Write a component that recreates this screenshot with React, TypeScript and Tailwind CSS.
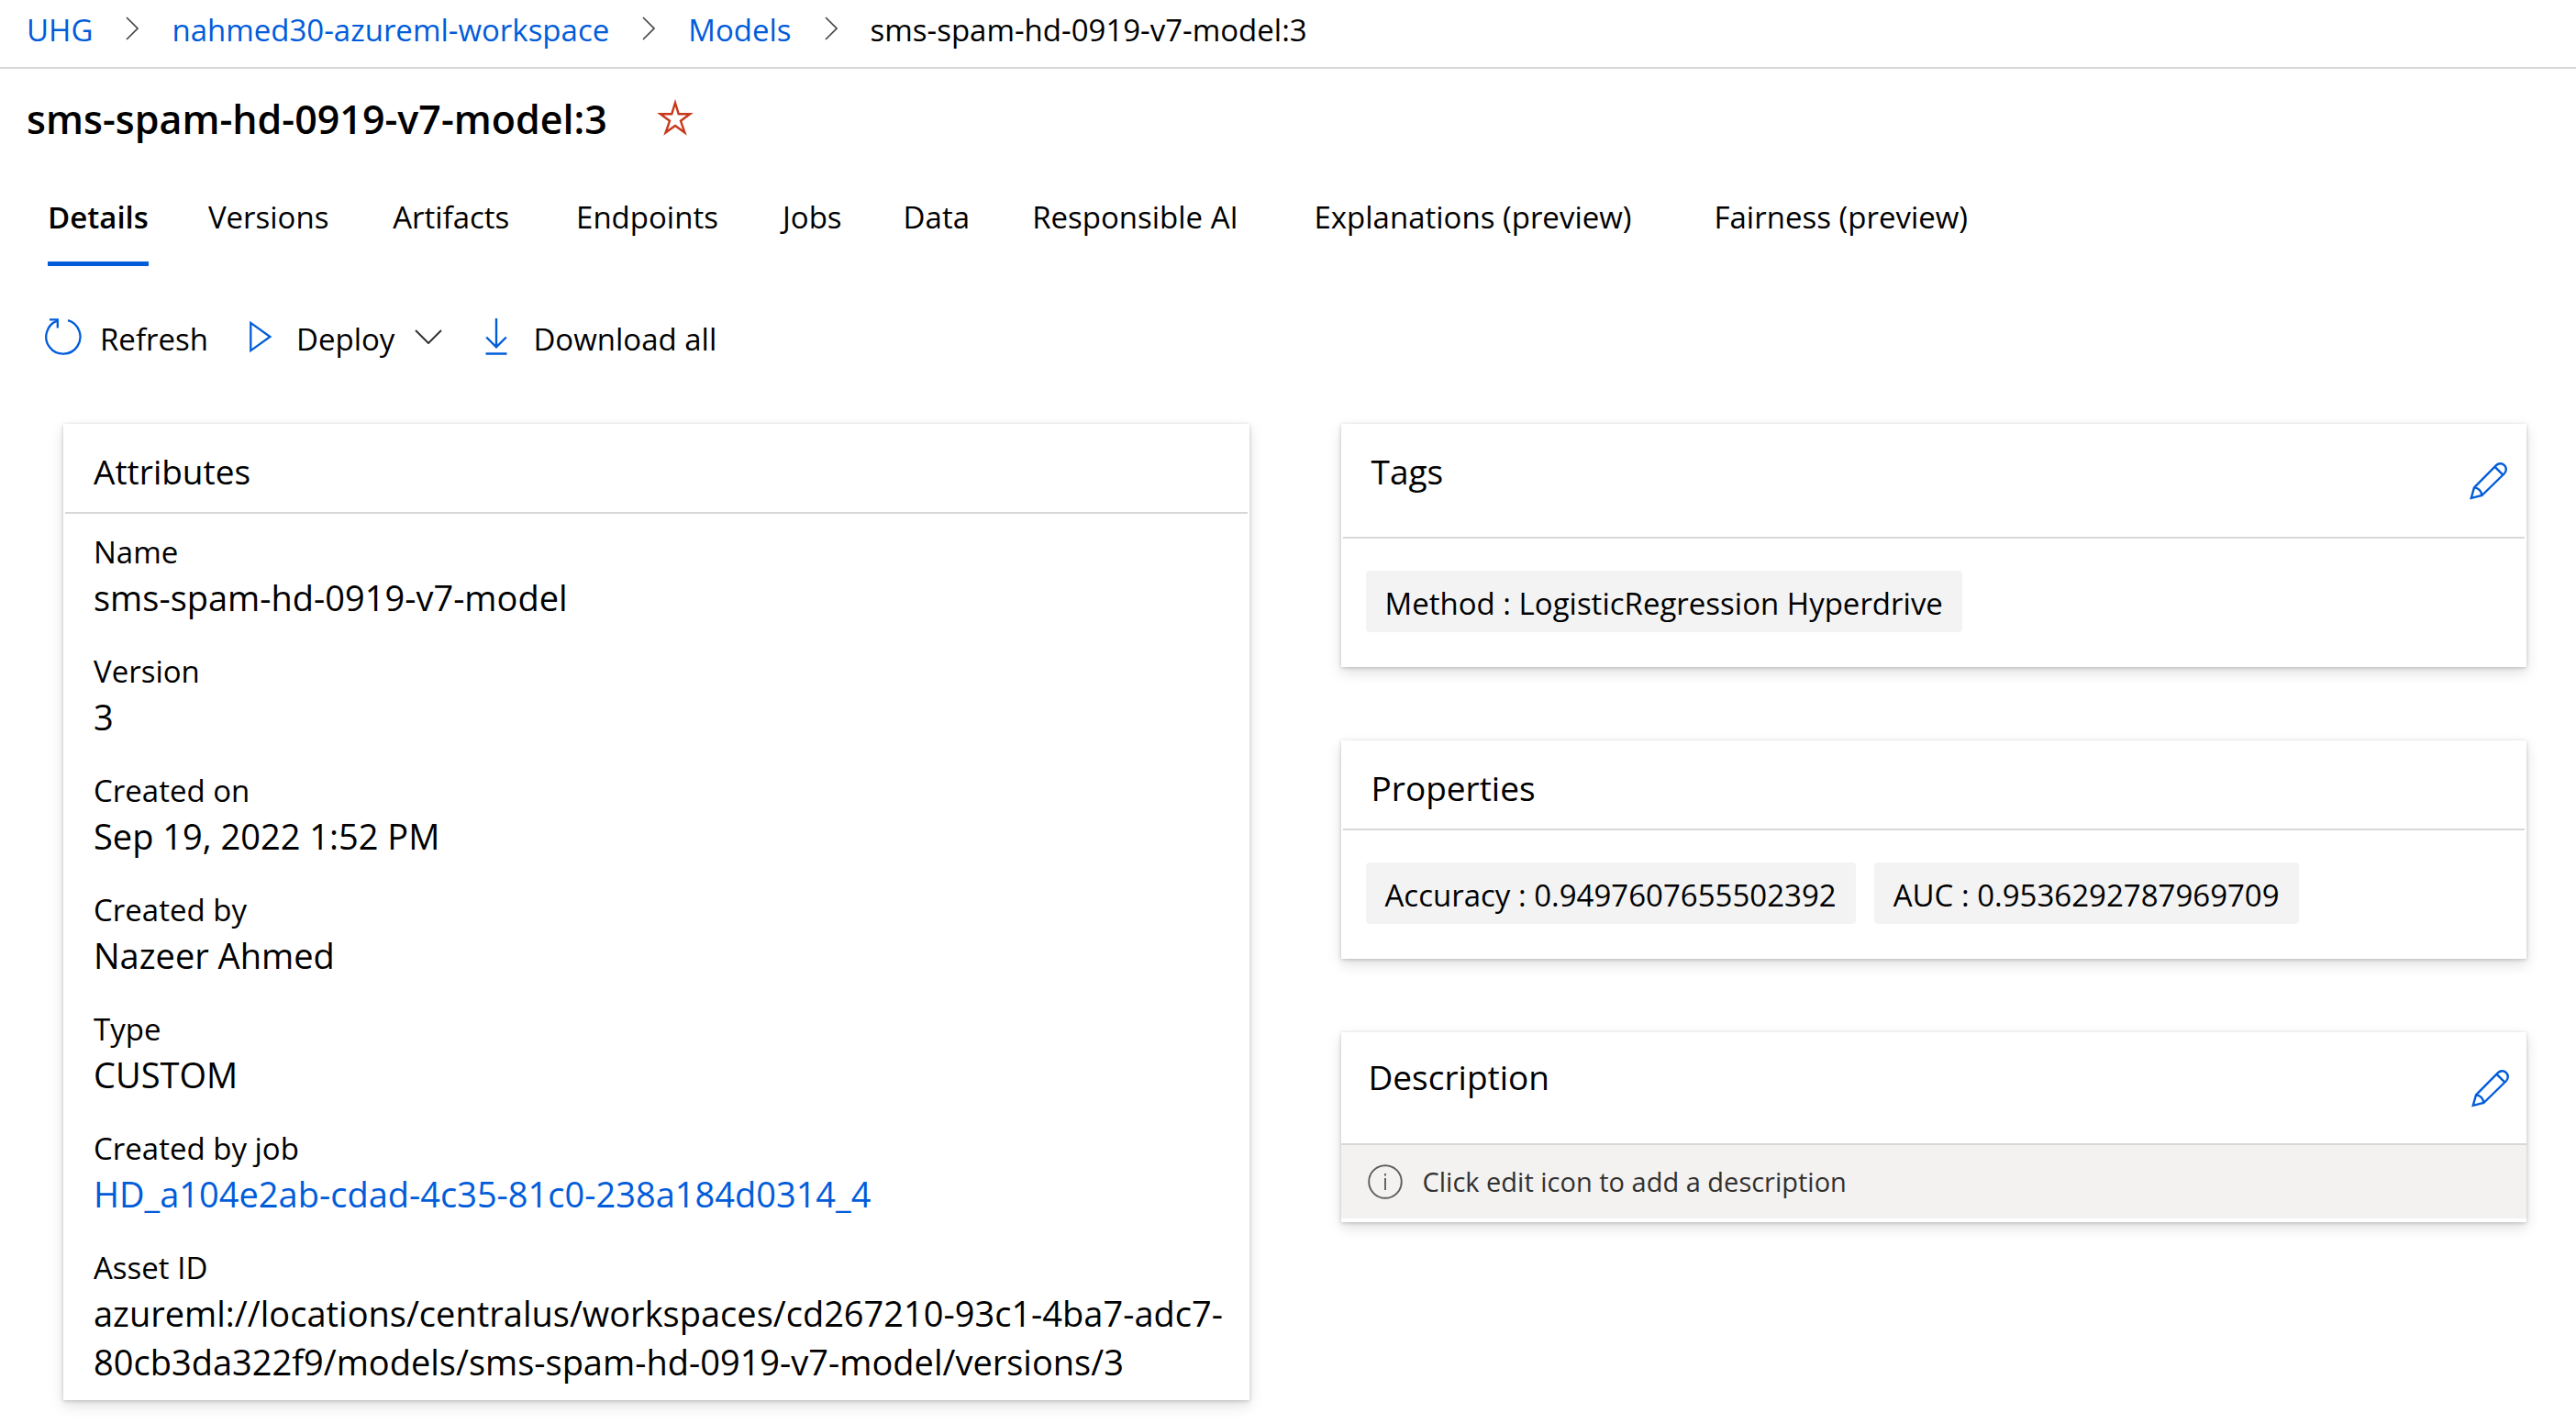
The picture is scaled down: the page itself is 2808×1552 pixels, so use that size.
import type { ReactNode } from "react";

const CRUMBS = ["UHG", "nahmed30-azureml-workspace", "Models"];

const TABS: { label: string; preview?: boolean }[] = [
  { label: "Details" },
  { label: "Versions" },
  { label: "Artifacts" },
  { label: "Endpoints" },
  { label: "Jobs" },
  { label: "Data" },
  { label: "Responsible AI" },
  { label: "Explanations (preview)", preview: true },
  { label: "Fairness (preview)", preview: true },
];

const ATTRIBUTES: { label: string; value: string; link?: boolean }[] = [
  { label: "Name", value: "sms-spam-hd-0919-v7-model" },
  { label: "Version", value: "3" },
  { label: "Created on", value: "Sep 19, 2022 1:52 PM" },
  { label: "Created by", value: "Nazeer Ahmed" },
  { label: "Type", value: "CUSTOM" },
  { label: "Created by job", value: "HD_a104e2ab-cdad-4c35-81c0-238a184d0314_4", link: true },
  {
    label: "Asset ID",
    value:
      "azureml://locations/centralus/workspaces/cd267210-93c1-4ba7-adc7-80cb3da322f9/models/sms-spam-hd-0919-v7-model/versions/3",
  },
];

function ChevronRight() {
  return (
    <svg width="14" height="26" viewBox="0 0 14 26" fill="none" stroke="#444" strokeWidth="1.6" aria-hidden="true">
      <path d="M1 1l12 12L1 25" />
    </svg>
  );
}

function ChevronDown() {
  return (
    <svg width="30" height="16" viewBox="0 0 30 16" fill="none" stroke="#333" strokeWidth="2" aria-hidden="true">
      <path d="M1 1l14 14L29 1" />
    </svg>
  );
}

function StarIcon() {
  return (
    <svg width="40" height="40" viewBox="0 0 40 40" fill="none" stroke="#c8381a" strokeWidth="2.4" aria-hidden="true">
      <path d="M20 4l3.7 12.2H36.2L26 23.8l4.4 12.7L20 29 9.6 36.5 14 23.8 3.8 16.2h12.5z" />
    </svg>
  );
}

function RefreshIcon() {
  return (
    <svg width="40" height="42" viewBox="0 0 40 42" fill="none" stroke="#015cda" strokeWidth="2.3" aria-hidden="true">
      <path d="M25 3.2A18.6 18.6 0 1 1 13.5 3.6" />
      <path d="M5 2.4h8.8v9" />
    </svg>
  );
}

function PlayIcon() {
  return (
    <svg width="25" height="36" viewBox="0 0 25 36" fill="none" stroke="#015cda" strokeWidth="2.3" aria-hidden="true">
      <path d="M1.3 2.9v30.2L22.4 18z" />
    </svg>
  );
}

function DownloadIcon() {
  return (
    <svg width="24" height="42" viewBox="0 0 24 42" fill="none" stroke="#015cda" strokeWidth="2.4" aria-hidden="true">
      <path d="M12 1v31M1.2 21.5L12 32.3l10.8-10.8M.5 39.5h23" />
    </svg>
  );
}

function PencilIcon() {
  return (
    <svg width="42" height="42" viewBox="0 0 42 42" fill="none" stroke="#015cda" strokeWidth="2.4" aria-hidden="true">
      <path d="M1.8 39.8L5 28.4 29 4.2a6.2 6.2 0 0 1 9 8.8L13.4 37z" />
      <path d="M27.6 5.8l8.6 8.6M5 28.4c4.6.6 7.8 3.8 8.4 8.6" />
    </svg>
  );
}

function InfoIcon() {
  return (
    <svg width="38" height="38" viewBox="0 0 38 38" fill="none" stroke="#605e5c" strokeWidth="1.9" aria-hidden="true">
      <circle cx="19" cy="19" r="17.8" />
      <path d="M19 15v13M19 10v2.4" />
    </svg>
  );
}

function Card({ children }: { children: ReactNode }) {
  return (
    <section className="bg-white shadow-[0_6px_14px_rgba(0,0,0,0.13),0_1px_4px_rgba(0,0,0,0.2)]">{children}</section>
  );
}

function Chip({ children }: { children: ReactNode }) {
  return <li className="rounded-sm bg-[#f3f3f3] px-[21px] pt-[5px] leading-[62px]">{children}</li>;
}

export default function App() {
  return (
    <div className="min-h-screen bg-white font-['Open_Sans','Noto_Sans',sans-serif] text-[33px] text-black">
      <nav aria-label="Breadcrumb" className="border-b-2 border-[#d8d8d8] px-[29px] pt-[9px] pb-4 leading-[48px]">
        <ol className="flex">
          {CRUMBS.map((c) => (
            <li key={c} className="flex items-center">
              <a href="#" className="text-[#015cda]">
                {c}
              </a>
              <span className="mx-9 pb-1">
                <ChevronRight />
              </span>
            </li>
          ))}
          <li aria-current="page">sms-spam-hd-0919-v7-model:3</li>
        </ol>
      </nav>

      <header className="flex items-center gap-[54px] px-[29px] pt-[27px]">
        <h1 className="text-[43px] leading-[56px] font-semibold">sms-spam-hd-0919-v7-model:3</h1>
        <button type="button" aria-label="Add to favorites" className="pb-1">
          <StarIcon />
        </button>
      </header>

      <div role="tablist" className="mt-[54px] flex gap-[65px] px-[52px] leading-[50px]">
        {TABS.map((t, i) => (
          <button
            key={t.label}
            type="button"
            role="tab"
            aria-selected={i === 0}
            data-label={t.label}
            data-preview={t.preview}
            className="flex flex-col border-b-5 border-transparent pb-[23px] text-left after:invisible after:h-0 after:overflow-hidden after:font-semibold after:content-[attr(data-label)] aria-selected:border-[#015cda] aria-selected:font-semibold data-[preview=true]:ml-2.5"
          >
            {t.label}
          </button>
        ))}
      </div>

      <div role="toolbar" aria-label="Model actions" className="mt-[55px] flex pr-12 pl-[49px] leading-[50px] [&_svg]:mb-1.5">
        <button type="button" className="flex items-center gap-5">
          <RefreshIcon />
          Refresh
        </button>
        <button type="button" className="ml-[45px] flex items-center gap-[26px]">
          <PlayIcon />
          <span className="flex items-center gap-[22px]">
            Deploy
            <ChevronDown />
          </span>
        </button>
        <button type="button" className="ml-[47px] flex items-center gap-7">
          <DownloadIcon />
          Download all
        </button>
      </div>

      <main className="mt-[67px] grid grid-cols-2 items-start gap-[100px] pr-[54px] pb-6 pl-[69px]">
        <Card>
          <h2 className="mx-0.5 border-b-2 border-[#d8d8d8] px-[31px] pt-[27px] pb-[19px] text-[37px] leading-[50px]">
            Attributes
          </h2>
          <dl className="flex flex-col gap-[31px] pt-[19px] pr-4 pb-[15px] pl-[33px]">
            {ATTRIBUTES.map((a) => (
              <div key={a.label}>
                <dt className="leading-[46px]">{a.label}</dt>
                <dd className="text-[38px] leading-[53px]">
                  {a.link ? (
                    <a href="#" className="text-[#015cda]">
                      {a.value}
                    </a>
                  ) : (
                    a.value
                  )}
                </dd>
              </div>
            ))}
          </dl>
        </Card>

        <div className="flex flex-col gap-20">
          <Card>
            <div className="mx-0.5 flex items-center justify-between border-b-2 border-[#d8d8d8] pr-[18px] pl-[31px]">
              <h2 className="pt-[27px] pb-[46px] text-[37px] leading-[50px]">Tags</h2>
              <button type="button" aria-label="Edit tags">
                <PencilIcon />
              </button>
            </div>
            <ul className="flex gap-5 px-[27px] pt-[35px] pb-[38px]">
              <Chip>Method : LogisticRegression Hyperdrive</Chip>
            </ul>
          </Card>

          <Card>
            <h2 className="mx-0.5 border-b-2 border-[#d8d8d8] px-[31px] pt-[27px] pb-[19px] text-[37px] leading-[50px]">
              Properties
            </h2>
            <ul className="flex gap-5 px-[27px] pt-[35px] pb-[38px]">
              <Chip>Accuracy : 0.9497607655502392</Chip>
              <Chip>AUC : 0.9536292787969709</Chip>
            </ul>
          </Card>

          <Card>
            <div className="flex items-center justify-between border-b-2 border-[#d8d8d8] pr-[18px] pl-[30px]">
              <h2 className="pt-6 pb-[47px] text-[37px] leading-[50px]">Description</h2>
              <button type="button" aria-label="Edit description">
                <PencilIcon />
              </button>
            </div>
            <div className="pb-1">
              <p className="flex items-center gap-[22px] bg-[#f3f2f1] px-[29px] text-[29px] leading-[80px] text-[#323130]">
                <InfoIcon />
                Click edit icon to add a description
              </p>
            </div>
          </Card>
        </div>
      </main>
    </div>
  );
}
